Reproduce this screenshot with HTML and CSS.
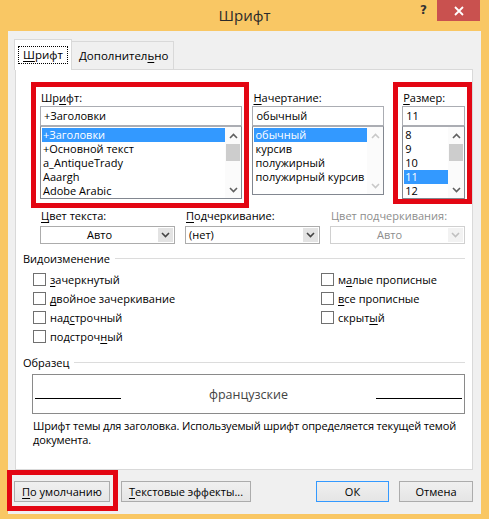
FILE: index.html
```html
<!DOCTYPE html>
<html lang="ru">
<head>
<meta charset="utf-8">
<title>Шрифт</title>
<link rel="stylesheet" href="styles.css">
</head>
<body>
<div class="window">
  <div class="titlebar">
    <div></div>
    <div class="title">Шрифт</div>
    <div class="controls">
      <div class="help">?</div>
      <div class="close"><svg width="10" height="10" viewBox="0 0 10 10"><path d="M1 1L9 9M9 1L1 9" stroke="#fff" stroke-width="1.8"/></svg></div>
    </div>
  </div>
  <div class="client">
    <div class="tabs">
      <div class="tab active"><span class="focus"><u>Ш</u>рифт</span></div>
      <div class="tab">Дополнител<u>ь</u>но</div>
    </div>
    <div class="panel">
      <div class="toprow">
        <div class="col c-font">
          <div class="lbl">Шр<u>и</u>фт:</div>
          <div class="input">+Заголовки</div>
          <div class="list">
            <div class="items">
              <div class="item sel">+Заголовки</div>
              <div class="item">+Основной текст</div>
              <div class="item">a_AntiqueTrady</div>
              <div class="item">Aaargh</div>
              <div class="item">Adobe Arabic</div>
            </div>
            <div class="sbar">
              <div class="arr"><svg width="9" height="6" viewBox="0 0 9 6"><path d="M1 5L4.5 1.5L8 5" fill="none" stroke="#606060" stroke-width="1.6"/></svg></div>
              <div class="track"><div class="thumb"></div></div>
              <div class="arr"><svg width="9" height="6" viewBox="0 0 9 6"><path d="M1 1L4.5 4.5L8 1" fill="none" stroke="#606060" stroke-width="1.6"/></svg></div>
            </div>
          </div>
        </div>
        <div class="col c-style">
          <div class="lbl"><u>Н</u>ачертание:</div>
          <div class="input">обычный</div>
          <div class="list short">
            <div class="items">
              <div class="item sel">обычный</div>
              <div class="item">курсив</div>
              <div class="item">полужирный</div>
              <div class="item">полужирный курсив</div>
            </div>
            <div class="sbar">
              <div class="arr"><svg width="9" height="6" viewBox="0 0 9 6"><path d="M1 5L4.5 1.5L8 5" fill="none" stroke="#c8c8c8" stroke-width="1.6"/></svg></div>
              <div class="track"></div>
              <div class="arr"><svg width="9" height="6" viewBox="0 0 9 6"><path d="M1 1L4.5 4.5L8 1" fill="none" stroke="#c8c8c8" stroke-width="1.6"/></svg></div>
            </div>
          </div>
        </div>
        <div class="col c-size">
          <div class="lbl"><u>Р</u>азмер:</div>
          <div class="input">11</div>
          <div class="list">
            <div class="items">
              <div class="item">8</div>
              <div class="item">9</div>
              <div class="item">10</div>
              <div class="item sel">11</div>
              <div class="item">12</div>
            </div>
            <div class="sbar">
              <div class="arr"><svg width="9" height="6" viewBox="0 0 9 6"><path d="M1 5L4.5 1.5L8 5" fill="none" stroke="#606060" stroke-width="1.6"/></svg></div>
              <div class="track"><div class="thumb"></div></div>
              <div class="arr"><svg width="9" height="6" viewBox="0 0 9 6"><path d="M1 1L4.5 4.5L8 1" fill="none" stroke="#606060" stroke-width="1.6"/></svg></div>
            </div>
          </div>
        </div>
      </div>

      <div class="row2">
        <div class="scol">
          <div class="lbl"><u>Ц</u>вет текста:</div>
          <div class="select"><span class="val center">Авто</span><span class="drop"><svg width="9" height="6" viewBox="0 0 9 6"><path d="M1 1L4.5 4.5L8 1" fill="none" stroke="#444" stroke-width="1.6"/></svg></span></div>
        </div>
        <div class="scol">
          <div class="lbl"><u>П</u>одчеркивание:</div>
          <div class="select"><span class="val">(нет)</span><span class="drop"><svg width="9" height="6" viewBox="0 0 9 6"><path d="M1 1L4.5 4.5L8 1" fill="none" stroke="#444" stroke-width="1.6"/></svg></span></div>
        </div>
        <div class="scol disabled">
          <div class="lbl">Цвет подчеркивания:</div>
          <div class="select"><span class="val center">Авто</span><span class="drop"><svg width="9" height="6" viewBox="0 0 9 6"><path d="M1 1L4.5 4.5L8 1" fill="none" stroke="#c0c0c0" stroke-width="1.6"/></svg></span></div>
        </div>
      </div>

      <div class="group g-effects"><span>Видоизменение</span><i></i></div>
      <div class="checks">
        <div class="ccol left">
          <div class="chk"><span class="box"></span><span><u>з</u>ачеркнутый</span></div>
          <div class="chk"><span class="box"></span><span><u>д</u>войное зачеркивание</span></div>
          <div class="chk"><span class="box"></span><span>над<u>с</u>трочный</span></div>
          <div class="chk"><span class="box"></span><span>подстроч<u>н</u>ый</span></div>
        </div>
        <div class="ccol">
          <div class="chk"><span class="box"></span><span>м<u>а</u>лые прописные</span></div>
          <div class="chk"><span class="box"></span><span><u>в</u>се прописные</span></div>
          <div class="chk"><span class="box"></span><span>скрыт<u>ы</u>й</span></div>
        </div>
      </div>

      <div class="group g-sample"><span>Образец</span><i></i></div>
      <div class="sample">
        <span class="sline"></span>
        <span class="stext">французские</span>
        <span class="sline"></span>
      </div>
      <div class="desc">Шрифт темы для заголовка. Используемый шрифт определяется текущей темой документа.</div>
    </div>

    <div class="buttons">
      <div class="btn b-default"><u>П</u>о умолчанию</div>
      <div class="btn b-effects"><u>Т</u>екстовые эффекты...</div>
      <div class="spacer"></div>
      <div class="btn b-ok">ОК</div>
      <div class="btn b-cancel">Отмена</div>
    </div>
  </div>
</div>

<div class="mark m1"></div>
<div class="mark m2"></div>
<div class="mark m3"></div>
</body>
</html>
```

FILE: styles.css
```css
* { box-sizing: border-box; }
html, body { margin: 0; padding: 0; }
body {
  width: 489px;
  height: 519px;
  overflow: hidden;
  position: relative;
  font-family: "Open Sans", "Noto Sans", sans-serif;
  font-size: 11px;
  color: #000;
}
u { text-decoration: underline; text-underline-offset: 2px; }

.window {
  height: 519px;
  background: #f9c764;
  padding: 0 8px 5px 8px;
  display: flex;
  flex-direction: column;
}
.titlebar {
  height: 31px;
  flex: none;
  display: grid;
  grid-template-columns: 1fr auto 1fr;
}
.title {
  font-size: 15px;
  line-height: 31px;
  color: #2b2b2b;
  text-align: center;
}
.controls {
  display: flex;
  justify-content: flex-end;
  align-items: flex-start;
  padding-right: 1px;
}
.help {
  width: 27px;
  height: 21px;
  font-weight: bold;
  font-size: 12px;
  line-height: 21px;
  text-align: center;
  color: #333;
  font-family: "DejaVu Sans", sans-serif;
}
.close {
  width: 43px;
  height: 21px;
  background: #c9514f;
  display: flex;
  align-items: center;
  justify-content: center;
}

.client {
  flex: 1;
  background: #f0f0f0;
  padding: 8px 8px 0 6px;
  display: flex;
  flex-direction: column;
}

.tabs {
  display: flex;
  align-items: flex-end;
  height: 31px;
  margin-bottom: -1px;
  position: relative;
  z-index: 1;
}
.tab {
  height: 28px;
  margin-bottom: 1px;
  padding: 0 5px 0 7px;
  border: 1px solid #d9d9d9;
  border-bottom: none;
  background: #f0f0f0;
  display: flex;
  align-items: center;
  font-size: 11.5px;
}
.tab.active {
  height: 31px;
  margin-bottom: 0;
  width: 58px;
  background: #fff;
  padding: 0 3px;
  margin-right: -1px;
  position: relative;
  z-index: 1;
}
.focus {
  border: 1px dotted #000;
  padding: 1px 4px;
  line-height: 14px;
}

.panel {
  margin-left: 1px;
  height: 401px;
  flex: none;
  background: #fff;
  border: 1px solid #d9d9d9;
  padding: 20px 7px 0 7px;
  display: flex;
  flex-direction: column;
}

.toprow {
  display: flex;
  margin-left: 17px;
  align-items: flex-start;
}
.col { display: flex; flex-direction: column; }
.c-font { width: 203px; margin-right: 10px; }
.c-style { width: 132px; margin-right: 18px; }
.c-size { width: 63px; }
.lbl {
  line-height: 15px;
  height: 15px;
  padding-left: 1px;
  white-space: nowrap;
}
.input {
  margin-top: 1px;
  height: 20px;
  border: 1px solid #abadb3;
  padding-left: 3px;
  line-height: 18px;
}
.list {
  height: 73px;
  border: 1px solid #828790;
  border-top-color: #abadb3;
  display: flex;
  padding: 1px 0 0 1px;
}
.list.short { height: 69px; }
.items { flex: 1; min-width: 0; }
.item {
  height: 14px;
  line-height: 14px;
  padding-left: 1px;
  white-space: nowrap;
  overflow: hidden;
}
.item.sel { background: #3399ff; color: #fff; }
.sbar {
  width: 16px;
  margin-top: -1px;
  display: flex;
  flex-direction: column;
  background: #fbfbfb;
}
.arr {
  height: 17px;
  display: flex;
  align-items: center;
  justify-content: center;
}
.track { flex: 1; }
.thumb { height: 17px; background: #cdcdcd; margin: 0 1px; }

.row2 {
  display: flex;
  gap: 10px;
  margin-left: 17px;
  margin-top: 9px;
}
.scol { width: 135px; display: flex; flex-direction: column; }
.select {
  margin-top: 3px;
  height: 18px;
  border: 1px solid #acacac;
  background: #fff;
  display: flex;
}
.val { flex: 1; line-height: 16px; padding-left: 3px; }
.val.center { text-align: center; padding-left: 0; }
.drop {
  width: 15px;
  margin: 1px 1px 1px 0;
  background: #e3e3e3;
  display: flex;
  align-items: center;
  justify-content: center;
}
.disabled .lbl, .disabled .val { color: #8d8d8d; }
.disabled .select { border-color: #d0d0d0; }
.disabled .drop { background: #f2f2f2; }

.group {
  display: flex;
  align-items: center;
  gap: 5px;
  line-height: 15px;
}
.group i { flex: 1; height: 1px; background: #dcdcdc; }
.g-effects { margin-top: 7px; }
.g-sample { margin-top: 9px; }

.checks {
  display: flex;
  margin-left: 10px;
  margin-top: 4px;
}
.ccol { display: flex; flex-direction: column; }
.ccol.left { width: 288px; }
.chk {
  height: 19px;
  display: flex;
  align-items: center;
  gap: 4px;
}
.box {
  width: 13px;
  height: 13px;
  border: 1px solid #707070;
  background: #fff;
}

.sample {
  margin-top: 4px;
  margin-left: 9px;
  height: 40px;
  border: 1px solid #8a8a8a;
  display: flex;
  align-items: center;
  justify-content: space-between;
  padding: 0 2px 0 2px;
}
.sline {
  width: 86px;
  height: 1px;
  background: #000;
  margin-top: 9px;
}
.stext { color: #444; font-size: 12.5px; }
.desc {
  margin-top: 5px;
  margin-left: 10px;
  line-height: 14px;
  letter-spacing: -0.15px;
}

.buttons {
  display: flex;
  margin-top: 11px;
  height: 21px;
}
.btn {
  height: 21px;
  border: 1px solid #acacac;
  background: linear-gradient(#f0f0f0, #e5e5e5);
  display: flex;
  align-items: center;
  justify-content: center;
}
.b-default { width: 96px; margin-right: 11px; }
.b-effects { width: 130px; }
.spacer { flex: 1; }
.b-ok { width: 73px; margin-right: 10px; border-color: #3399ff; }
.b-cancel { width: 74px; }

.mark {
  position: absolute;
  border: 5px solid #e30613;
}
.m1 { left: 31px; top: 82px; width: 218px; height: 126px; }
.m2 { left: 393px; top: 82px; width: 79px; height: 122px; }
.m3 { left: 7px; top: 470px; width: 111px; height: 41px; }
```
